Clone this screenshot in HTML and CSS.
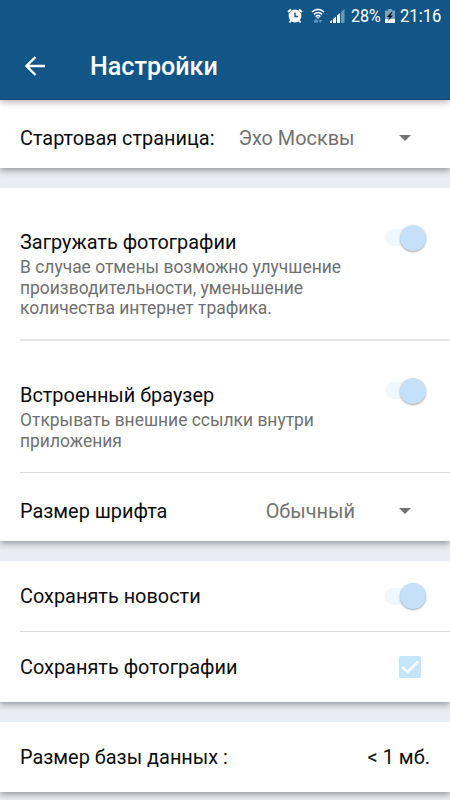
FILE: index.html
```html
<!DOCTYPE html>
<html lang="ru">
<head>
  <meta charset="UTF-8" />
  <title>Настройки</title>
  <link rel="stylesheet" href="styles.css">
</head>
<body>
  <header class="topBar">
    <div class="statusBar">
      <svg class="alarmIcon" width="16" height="16" viewBox="0 0 16 16">
        <path d="M1 4 L4 1.5 M15 4 L12 1.5" stroke="#fff" stroke-width="2" />
        <path d="M4 12.500 L2.500 14.500 M12 12.500 L13.500 14.500" stroke="#fff" stroke-width="1.800" />
        <circle cx="8" cy="8" r="6.400" fill="#fff" />
        <path d="M8 4.500 V8.500 H11" fill="none" stroke="#125687" stroke-width="1.400" />
      </svg>
      <svg class="wifiIcon" width="14" height="16" viewBox="0 0 14 16">
        <g fill="none" stroke="#fff" stroke-width="1.500">
          <path d="M1 4 Q7 -1.200 13 4" />
          <path d="M2.800 6.400 Q7 2.600 11.200 6.400" />
          <path d="M4.600 8.600 Q7 6.400 9.400 8.600" />
        </g>
        <path d="M5.400 9.300 H8.600 L7 11 Z" fill="#fff" />
        <path d="M3 13 L5 10.800 L7 13 V14.500 H3 Z M7.500 12 H11 L9.200 15 Z" fill="#6c98b6" />
      </svg>
      <svg class="signalIcon" width="16" height="16" viewBox="0 0 16 16">
        <path d="M1 15 V13.500 L3 12 V15 Z M4 15 V11 L7 8.500 V15 Z M8 15 V7.500 L11 5 V15 Z" fill="#fff" />
        <path d="M12 15 V4 L15.500 1 V15 Z" fill="#6c98b6" />
      </svg>
      <span class="battery">28%</span>
      <svg class="batteryIcon" width="10" height="16" viewBox="0 0 10 16">
        <path d="M3 1 H7 V2.500 H10 V11 H0 V2.500 H3 Z" fill="#7ba0ba" />
        <path d="M0 11 H10 V15 H0 Z" fill="#fff" />
        <path d="M6.500 4 L2 9 H4.500 L3 13 L8 7.500 H5.500 L7.500 4 Z" fill="#111" />
      </svg>
      <span class="clock">21:16</span>
    </div>
    <div class="titleBar">
      <svg class="backIcon" width="20" height="20" viewBox="0 0 20 20">
        <path d="M20 10 H2 M10.500 1 L1.500 10 L10.500 19" fill="none" stroke="#fff" stroke-width="2.300" />
      </svg>
      <h1>Настройки</h1>
    </div>
  </header>

  <main>
    <!-- Start page -->
    <section class="card">
      <div class="row start">
        <span class="label">Стартовая страница:</span>
        <span class="value">Эхо Москвы</span>
        <span class="arrow"></span>
      </div>
    </section>

    <!-- Display -->
    <section class="card">
      <div class="row tall photos">
        <div class="text">
          <div class="label">Загружать фотографии</div>
          <p>В случае отмены возможно улучшение производительности, уменьшение количества интернет трафика.</p>
        </div>
        <div class="switch"></div>
      </div>
      <div class="row tall browser">
        <div class="text">
          <div class="label">Встроенный браузер</div>
          <p>Открывать внешние ссылки внутри приложения</p>
        </div>
        <div class="switch"></div>
      </div>
      <div class="row font">
        <span class="label">Размер шрифта</span>
        <span class="value">Обычный</span>
        <span class="arrow"></span>
      </div>
    </section>

    <!-- Offline storage -->
    <section class="card">
      <div class="row news">
        <span class="label">Сохранять новости</span>
        <div class="switch"></div>
      </div>
      <div class="row savePhotos">
        <span class="label">Сохранять фотографии</span>
        <svg class="checkbox" width="22" height="22" viewBox="0 0 22 22">
          <rect width="22" height="22" rx="2" fill="#c5e5fd" />
          <path d="M3.200 11 L8.500 16 L19 5.300" fill="none" stroke="#fff" stroke-width="2.500" />
        </svg>
      </div>
    </section>

    <section class="card">
      <div class="row">
        <span class="label">Размер базы данных :</span>
        <span class="size">&lt; 1 мб.</span>
      </div>
    </section>
  </main>
</body>
</html>
```

FILE: styles.css
```css
* {
  box-sizing: border-box;
}
body {
  margin: 0;
  height: 800px;
  overflow: hidden;
  font-family: Roboto, "Noto Sans", sans-serif;
  background: #e8edf5;
  color: #0c0c0c;
}
.topBar {
  position: relative;
  z-index: 1;
  height: 100px;
  background: #125687;
  border-bottom: 1px solid #074579;
  box-shadow: 0 2px 7px rgba(0, 0, 0, 0.3);
  color: #fff;
}
.statusBar {
  display: flex;
  align-items: center;
  height: 31px;
  padding-left: 287px;
}
.wifiIcon {
  margin-left: 8px;
}
.signalIcon {
  margin-left: 4px;
}
.battery,
.clock {
  font-size: 18.5px;
  white-space: nowrap;
  transform-origin: left center;
}
.battery {
  width: 30px;
  margin-left: 6px;
  transform: scaleX(0.87);
}
.batteryIcon {
  margin-left: 4px;
}
.clock {
  margin-left: 5px;
  transform: scaleX(0.9);
}
.titleBar {
  display: flex;
  align-items: center;
  height: 69px;
  padding-left: 25px;
}
h1 {
  margin: 2px 0 0 45px;
  font-size: 25.1px;
  line-height: 30px;
  font-weight: 500;
}
.card {
  margin-bottom: 20px;
  background: #fff;
  box-shadow: 0 2px 7px rgba(0, 0, 0, 0.4);
  clip-path: inset(0 0 -12px 0);
}
.row {
  display: flex;
  align-items: center;
  height: 70px;
  margin-left: 20px;
  padding-right: 20px;
}
.row + .row {
  border-top: 1px solid #d9d9d9;
}
.row.start {
  height: 68px;
  padding-top: 8px;
}
.label,
.value {
  padding-top: 2px;
  font-size: 19.9px;
  line-height: 24px;
}
.value {
  color: #727272;
}
.start .value {
  margin-left: 24px;
}
.font .value {
  margin-left: auto;
}
.arrow {
  border: 6px solid transparent;
  border-top-color: #737373;
  border-bottom: 0;
}
.start .arrow {
  margin: 0 19px 0 auto;
}
.font .arrow {
  margin: 0 19px 0 44px;
}
.row.tall {
  align-items: flex-start;
  justify-content: space-between;
}
.row.photos {
  height: 151px;
  padding-top: 42px;
}
.row.browser {
  height: 133px;
  padding-top: 42px;
  border-top: 2px solid #e6e6e6;
}
.row.font {
  height: 69px;
  padding-top: 8px;
}
.text {
  width: 350px;
}
.text .label {
  padding-top: 1px;
}
p {
  margin: 2px 0 0;
  font-size: 17.45px;
  line-height: 20.6px;
  color: #707070;
}
/* the thumb sits at the right end of a fainter track */
.switch {
  display: flex;
  align-items: center;
  justify-content: flex-end;
  width: 41px;
  height: 17px;
  margin-right: 4px;
  border-radius: 9px;
  background: #f0f8fe;
}
.switch::after {
  content: "";
  width: 26px;
  height: 26px;
  flex: none;
  border-radius: 50%;
  background: #c4e1f9;
  box-shadow: 0 1px 2px rgba(0, 0, 0, 0.35);
}
.tall .switch {
  margin-top: -1px;
}
.news .switch {
  margin-left: auto;
}
.row.savePhotos {
  height: 71px;
}
.checkbox {
  margin: 0 9px 0 auto;
}
.size {
  margin-left: auto;
  font-size: 20px;
}
```
